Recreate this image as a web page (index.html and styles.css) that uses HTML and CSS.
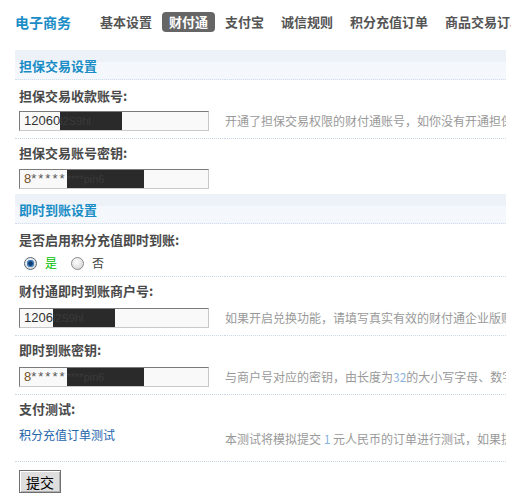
FILE: index.html
```html
<!DOCTYPE html>
<html lang="zh-CN">
<head>
<meta charset="utf-8">
<title>电子商务 - 财付通</title>
<link rel="stylesheet" href="styles.css">
</head>
<body>
<div class="top">
  <h1 class="brand">电子商务</h1>
  <ul class="nav">
    <li>基本设置</li>
    <li class="on">财付通</li>
    <li>支付宝</li>
    <li>诚信规则</li>
    <li>积分充值订单</li>
    <li>商品交易订单</li>
  </ul>
</div>

<form class="panel">
  <table class="settings">
    <colgroup><col class="c-field"><col class="c-tip"></colgroup>
    <tr class="sec"><th colspan="2">担保交易设置</th></tr>

    <tr class="lbl"><td colspan="2">担保交易收款账号:</td></tr>
    <tr class="inp">
      <td><div class="field"><span>12060</span><span class="mask mask-id">l2S9hl</span></div></td>
      <td class="tip">开通了担保交易权限的财付通账号，如你没有开通担保交易，请联系财付通客服开通</td>
    </tr>

    <tr class="lbl"><td colspan="2">担保交易账号密钥:</td></tr>
    <tr class="inp tight">
      <td><div class="field"><span class="lead">8</span><span class="stars">*****</span><span class="mask mask-key">****pin6</span></div></td>
      <td class="tip"></td>
    </tr>

    <tr class="sec"><th colspan="2">即时到账设置</th></tr>

    <tr class="lbl"><td colspan="2">是否启用积分充值即时到账:</td></tr>
    <tr class="opt">
      <td colspan="2">
        <div class="choices">
          <label class="choice"><input class="radio" type="radio" name="instant" checked><span class="yes">是</span></label>
          <label class="choice"><input class="radio" type="radio" name="instant"><span>否</span></label>
        </div>
      </td>
    </tr>

    <tr class="lbl"><td colspan="2">财付通即时到账商户号:</td></tr>
    <tr class="inp">
      <td><div class="field"><span>1206</span><span class="mask mask-id">l2S9hl</span></div></td>
      <td class="tip">如果开启兑换功能，请填写真实有效的财付通企业版账号，用于接收积分充值的款项</td>
    </tr>

    <tr class="lbl"><td colspan="2">即时到账密钥:</td></tr>
    <tr class="inp">
      <td><div class="field"><span class="lead">8</span><span class="stars">*****</span><span class="mask mask-key">****pin6</span></div></td>
      <td class="tip">与商户号对应的密钥，由长度为<em class="num">32</em>的大小写字母、数字组成</td>
    </tr>

    <tr class="lbl"><td colspan="2">支付测试:</td></tr>
    <tr class="test">
      <td><a class="link" href="#">积分充值订单测试</a></td>
      <td class="tip">本测试将模拟提交 <em class="num">1</em> 元人民币的订单进行测试，如果提交后成功出现付款界面，说明设置成功</td>
    </tr>
  </table>
  <button class="submit" type="button">提交</button>
</form>
</body>
</html>
```
FILE: styles.css
```css
body {
  margin: 0;
  width: 511px;
  overflow: hidden;
  background: #fff;
  color: #333;
  font-family: "Noto Sans CJK SC", sans-serif;
  font-size: 12px;
}

/* header: title and tab strip */
.top {
  display: flex;
  align-items: center;
  height: 20px;
  padding: 12px 0 0 15px;
  margin-bottom: 18px;
  white-space: nowrap;
}
.brand {
  margin: 0;
  font-size: 14px;
  font-weight: bold;
  line-height: 20px;
  color: #1a8dc6;
}
.nav {
  display: flex;
  gap: 3px;
  margin: 0 0 0 22px;
  padding: 0;
  list-style: none;
}
.nav li {
  padding: 0 7px;
  font-size: 13px;
  font-weight: bold;
  line-height: 20px;
  color: #555;
  border-radius: 4px;
}
.nav li.on {
  background: #666;
  color: #fff;
}

/* settings panel */
.panel {
  margin: 0 0 0 15px;
  width: 491px;
  overflow: hidden;
}
.settings {
  width: 491px;
  border-collapse: collapse;
  table-layout: fixed;
}
.c-field { width: 210px; }
.settings td,
.settings th {
  padding: 0;
  text-align: left;
}

.sec th {
  height: 26px;
  padding: 3px 0 0 4px;
  line-height: 26px;
  font-size: 13px;
  font-weight: bold;
  color: #1a8dc6;
  background: linear-gradient(#edf2f9 0 12px, #f4f8fc 12px);
  border-bottom: 1px dotted #d2deeb;
}

.lbl td {
  padding: 5px 4px 2px;
  line-height: 18px;
  font-size: 13px;
  font-weight: bold;
  color: #4a4a4a;
}
.sec + .lbl td {
  padding: 7px 4px 0;
}

.inp td {
  padding: 6px 0 7px;
  vertical-align: middle;
  border-bottom: 1px dotted #c9d7e8;
}
.inp.tight td {
  padding: 5px 0;
  border-bottom: 0;
}

.tip {
  line-height: 18px;
  color: #999;
  white-space: nowrap;
  overflow: hidden;
}
.num {
  font-style: normal;
  color: #86b2de;
}

/* text fields */
.field {
  display: flex;
  box-sizing: border-box;
  width: 190px;
  height: 20px;
  margin-left: 4px;
  padding-left: 4px;
  border: 1px solid;
  border-color: #7b7b7b #c9c9c9 #c9c9c9 #7b7b7b;
  background: #f9f9f9;
  font: 13px/18px "Liberation Sans", sans-serif;
  color: #333;
  overflow: hidden;
  white-space: nowrap;
}
.lead { color: #7a5128; }
.stars {
  color: #555;
  letter-spacing: 2px;
}
.mask {
  background: #2a2a2a;
  color: #3a3a3a;
  font-size: 11px;
  overflow: hidden;
}
.mask-id { width: 62px; }
.mask-key { width: 77px; }

/* radio choices */
.opt td {
  padding: 5px 0 4px 9px;
  border-bottom: 1px dotted #c9d7e8;
}
.choices {
  display: flex;
  gap: 14px;
  line-height: 18px;
  font-size: 12px;
  color: #444;
}
.choice {
  display: flex;
  align-items: center;
}
.radio {
  appearance: none;
  -webkit-appearance: none;
  box-sizing: border-box;
  width: 13px;
  height: 13px;
  margin: 0 8px 0 0;
  border: 1px solid #8a8a8a;
  border-radius: 50%;
  background: radial-gradient(circle at 40% 35%, #fff, #cdcdcd);
}
.radio:checked {
  border-color: #5a6878;
  background:
    radial-gradient(circle, #123f70 0 2px, #3f7fbf 2.5px 3.5px, transparent 4px),
    radial-gradient(circle at 40% 35%, #fff, #c8c8c8);
}
.yes { color: #00c000; }

/* payment test row */
.test td {
  padding: 10px 0 13px;
  vertical-align: top;
  border-bottom: 1px dotted #c9d7e8;
}
.test td:first-child {
  padding: 6px 0 16px 4px;
}
.link {
  line-height: 18px;
  color: #2565ad;
  text-decoration: none;
}

.submit {
  display: block;
  width: 42px;
  height: 23px;
  margin: 8px 0 0 4px;
  padding: 0;
  font: 14px "Noto Sans CJK SC", sans-serif;
  color: #000;
  background: #dedede;
  border: 1px solid #6f6f6f;
  box-shadow: inset 1px 1px #fff, inset -1px -1px #b0b0b0;
}
```
